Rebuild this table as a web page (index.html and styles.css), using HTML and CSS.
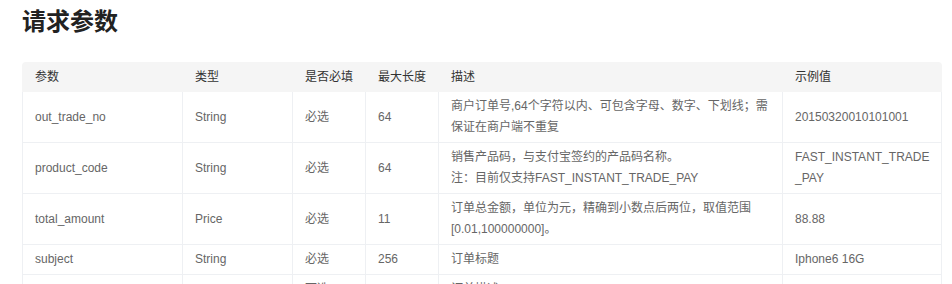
FILE: index.html
```html
<!DOCTYPE html>
<html lang="zh-CN">
<head>
<meta charset="utf-8">
<title>请求参数</title>
<link rel="stylesheet" href="styles.css">
</head>
<body>
<div class="doc">
  <h2 class="doc-title">请求参数</h2>
  <table class="params">
    <colgroup>
      <col class="c-name"><col class="c-type"><col class="c-req"><col class="c-len"><col class="c-desc"><col class="c-ex">
    </colgroup>
    <thead>
      <tr>
        <th>参数</th><th>类型</th><th>是否必填</th><th>最大长度</th><th>描述</th><th>示例值</th>
      </tr>
    </thead>
    <tbody>
      <tr>
        <td>out_trade_no</td><td>String</td><td>必选</td><td>64</td>
        <td>商户订单号,64个字符以内、可包含字母、数字、下划线；需保证在商户端不重复</td>
        <td>20150320010101001</td>
      </tr>
      <tr>
        <td>product_code</td><td>String</td><td>必选</td><td>64</td>
        <td>销售产品码，与支付宝签约的产品码名称。<br>注：目前仅支持FAST_INSTANT_TRADE_PAY</td>
        <td class="ex">FAST_INSTANT_TRADE_PAY</td>
      </tr>
      <tr>
        <td>total_amount</td><td>Price</td><td>必选</td><td>11</td>
        <td>订单总金额，单位为元，精确到小数点后两位，取值范围<br>[0.01,100000000]。</td>
        <td>88.88</td>
      </tr>
      <tr>
        <td>subject</td><td>String</td><td>必选</td><td>256</td>
        <td>订单标题</td>
        <td>Iphone6 16G</td>
      </tr>
      <tr>
        <td>body</td><td>String</td><td>可选</td><td>128</td>
        <td>订单描述</td>
        <td>Iphone6 16G</td>
      </tr>
    </tbody>
  </table>
</div>
</body>
</html>
```

FILE: styles.css
```css
html, body {
  margin: 0;
  padding: 0;
  background: #fff;
}

body {
  font-family: "Liberation Sans", Arial, "Noto Sans CJK SC", sans-serif;
  color: #666;
}

.doc {
  padding: 0 11px 0 22px;
}

.doc-title {
  margin: 0;
  padding-top: 10px;
  height: 62px;
  box-sizing: border-box;
  font-size: 24px;
  line-height: 24px;
  font-weight: bold;
  color: #222;
}

.params {
  width: 920px;
  border-collapse: separate;
  border-spacing: 0;
  table-layout: fixed;
  font-size: 12px;
  line-height: 21px;
}

.c-name { width: 161px; }
.c-type { width: 110px; }
.c-req { width: 73px; }
.c-len { width: 73px; }
.c-desc { width: 344px; }
.c-ex { width: 159px; }

.params th {
  background: #f5f5f5;
  color: #333;
  font-weight: normal;
  text-align: left;
  padding: 5px 12px 4px 12px;
  border-left: 1px solid transparent;
}

.params th + th {
  border-left: 0;
}

.params th:first-child {
  border-top-left-radius: 4px;
}

.params th:last-child {
  border-top-right-radius: 4px;
}

.params td {
  padding: 4px 12px;
  vertical-align: middle;
  border-right: 1px solid #eef0f3;
  border-bottom: 1px solid #eef0f3;
  color: #666;
}

.params td:first-child {
  border-left: 1px solid #eef0f3;
}

.params td.ex {
  padding-right: 8px;
  word-break: break-all;
}
```
